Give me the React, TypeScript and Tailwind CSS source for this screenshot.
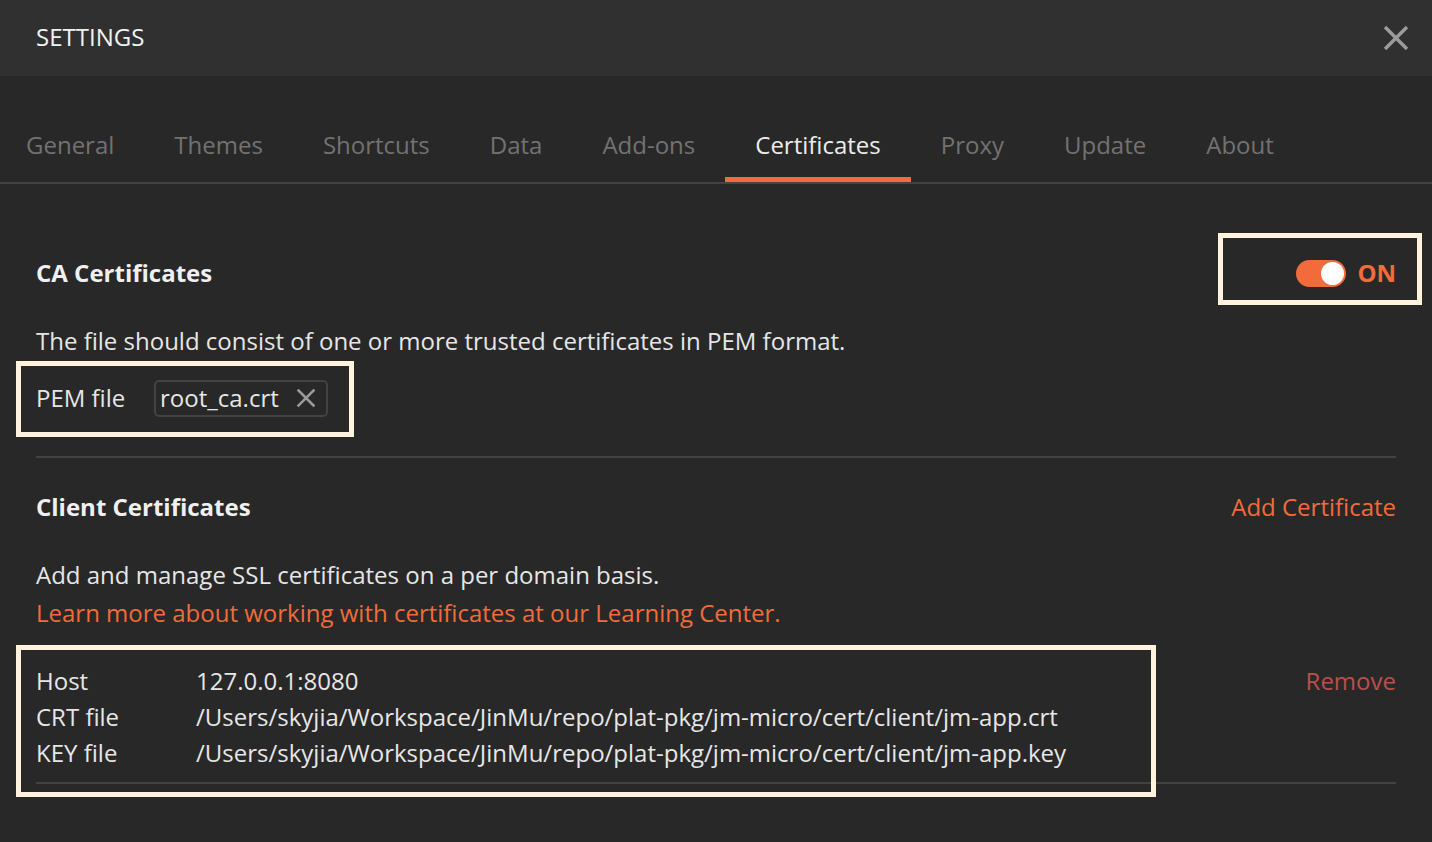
import React from "react";

const tabs = [
  "General",
  "Themes",
  "Shortcuts",
  "Data",
  "Add-ons",
  "Certificates",
  "Proxy",
  "Update",
  "About",
];

const certRows = [
  { label: "Host", value: "127.0.0.1:8080" },
  {
    label: "CRT file",
    value: "/Users/skyjia/Workspace/JinMu/repo/plat-pkg/jm-micro/cert/client/jm-app.crt",
  },
  {
    label: "KEY file",
    value: "/Users/skyjia/Workspace/JinMu/repo/plat-pkg/jm-micro/cert/client/jm-app.key",
  },
];

const CloseIcon = ({ size, stroke }: { size: number; stroke: number }) => (
  <svg width={size} height={size} viewBox="0 0 24 24" fill="none">
    <path
      d="M3 3L21 21M21 3L3 21"
      stroke="currentColor"
      strokeWidth={stroke}
      strokeLinecap="square"
    />
  </svg>
);

const App = () => {
  return (
    <div
      className="w-[1432px] h-[842px] overflow-hidden bg-[#282828] text-[#e6e6e6] text-[24px]"
      style={{ fontFamily: '"Open Sans", "Noto Sans", sans-serif' }}
    >
      {/* Header */}
      <div className="h-[76px] bg-[#303030] flex items-center justify-between pl-9 pr-[23px]">
        <span className="text-[24px] leading-[32px] text-[#f2f2f2] -mt-[2px]">SETTINGS</span>
        <span className="text-[#9b9b9b]">
          <CloseIcon size={26} stroke={3.2} />
        </span>
      </div>

      {/* Tabs */}
      <div className="h-[108px] border-b-2 border-[#434343] flex items-end -ml-1">
        {tabs.map((t) => (
          <div
            key={t}
            className={
              t === "Certificates"
                ? "px-[30px] pb-[16px] leading-[32px] border-b-[5px] border-[#f26b3a] text-[#ececec]"
                : "px-[30px] pb-[16px] leading-[32px] border-b-[5px] border-transparent text-[#727272]"
            }
          >
            {t}
          </div>
        ))}
      </div>

      {/* Content */}
      <div className="px-9">
        {/* CA Certificates */}
        <div className="mt-[69px] h-[40px] flex items-center justify-between">
          <span className="font-bold leading-[32px] text-[#f0f0f0]">CA Certificates</span>
          <div className="relative h-[32px] flex items-center gap-[11px]">
            <div className="w-[50px] h-[27px] rounded-full bg-[#f26b3a] flex items-center justify-end pr-[2px]">
              <div className="w-[23px] h-[23px] rounded-full bg-white" />
            </div>
            <span className="font-bold leading-[32px] text-[#f26b3a]">ON</span>
            <div className="absolute right-[-26px] top-[-24px] w-[204px] h-[72px] border-[5px] border-[#fff3de] pointer-events-none" />
          </div>
        </div>

        <div className="mt-[32px] leading-[32px]">
          The file should consist of one or more trusted certificates in PEM format.
        </div>

        <div className="relative mt-[21px] h-[40px] flex items-center">
          <span className="w-[118px] leading-[32px]">PEM file</span>
          <div className="h-[37px] flex items-center border-2 border-[#434343] rounded-[5px] pl-[4px] pr-[10px] gap-[17px]">
            <span className="leading-[30px]">root_ca.crt</span>
            <span className="text-[#9b9b9b]">
              <CloseIcon size={20} stroke={3} />
            </span>
          </div>
          <div className="absolute left-[-20px] top-[-17px] w-[338px] h-[76px] border-[5px] border-[#fff3de] pointer-events-none" />
        </div>

        <div className="mt-[38px] h-[2px] bg-[#434343]" />

        {/* Client Certificates */}
        <div className="mt-[29px] h-[40px] flex items-center justify-between">
          <span className="font-bold leading-[32px] text-[#f0f0f0]">Client Certificates</span>
          <span className="leading-[32px] text-[#f26b3a]">Add Certificate</span>
        </div>

        <div className="mt-[29px] leading-[38px]">
          <div>Add and manage SSL certificates on a per domain basis.</div>
          <div className="text-[#f26b3a]">
            Learn more about working with certificates at our Learning Center.
          </div>
        </div>

        <div className="mt-[31px] flex justify-between">
          <div className="relative">
            {certRows.map((r) => (
              <div key={r.label} className="flex leading-[36px]">
                <span className="w-[160px]">{r.label}</span>
                <span>{r.value}</span>
              </div>
            ))}
            <div className="absolute left-[-20px] top-[-18px] w-[1140px] h-[152px] border-[5px] border-[#fff3de] pointer-events-none" />
          </div>
          <span className="leading-[36px] text-[#b9504a]">Remove</span>
        </div>

        <div className="mt-[11px] h-[2px] bg-[#434343]" />
      </div>
    </div>
  );
};

export default App;
